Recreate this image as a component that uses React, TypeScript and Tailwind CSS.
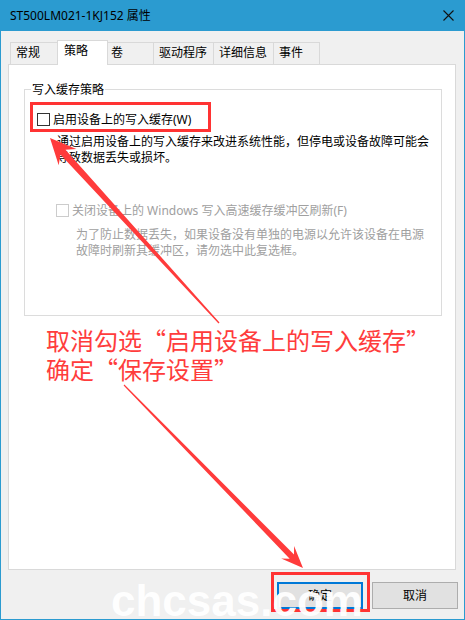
import React from "react";

type Pt = [number, number];

// Tapered annotation arrow: thin at the tail, widening toward a notched head.
function arrowPoints(tail: Pt, tip: Pt, headLen: number, headHalf: number, shaftTail: number, shaftHead: number): string {
  const dx = tip[0] - tail[0];
  const dy = tip[1] - tail[1];
  const len = Math.hypot(dx, dy);
  const ux = dx / len;
  const uy = dy / len;
  const nx = -uy;
  const ny = ux;
  const bx = tip[0] - ux * headLen;
  const by = tip[1] - uy * headLen;
  const jx = bx + ux * headLen * 0.2;
  const jy = by + uy * headLen * 0.2;
  const pts: Pt[] = [
    tip,
    [bx + nx * headHalf - ux * 2, by + ny * headHalf - uy * 2],
    [jx + nx * shaftHead, jy + ny * shaftHead],
    [tail[0] + nx * shaftTail, tail[1] + ny * shaftTail],
    [tail[0] - nx * shaftTail, tail[1] - ny * shaftTail],
    [jx - nx * shaftHead, jy - ny * shaftHead],
    [bx - nx * headHalf - ux * 2, by - ny * headHalf - uy * 2],
  ];
  return pts.map((p) => `${p[0].toFixed(1)},${p[1].toFixed(1)}`).join(" ");
}

const tabs = [
  { label: "常规", w: "w-[48px]", pl: "pl-[5px]", first: true },
  { label: "策略", w: "w-[51px]", pl: "pl-[6px]", active: true },
  { label: "卷", w: "w-[46px]", pl: "pl-[3px]" },
  { label: "驱动程序", w: "w-[60px]", pl: "pl-[5px]" },
  { label: "详细信息", w: "w-[60px]", pl: "pl-[5px]" },
  { label: "事件", w: "w-[46px]", pl: "pl-[5px]" },
];

export default function App() {
  return (
    <div className="relative w-[465px] h-[620px] overflow-hidden bg-[#f0f0f0] border-x border-b border-[#2b9bd0] flex flex-col font-['Noto_Sans','Noto_Sans_CJK_SC',sans-serif] text-[12px] text-black">
      {/* title bar */}
      <div className="h-[31px] -mx-px bg-[#2b9bd0] flex items-center justify-between pl-[10px] pr-[11px] shrink-0">
        <span className="leading-[16px] text-[12px] text-black">ST500LM021-1KJ152 属性</span>
        <svg width="11" height="11" viewBox="0 0 11 11" className="block">
          <path d="M0.5 0.5 L10.5 10.5 M10.5 0.5 L0.5 10.5" stroke="#111" strokeWidth="1.1" fill="none" />
        </svg>
      </div>

      <div className="flex-1 flex flex-col pl-[7px] pr-[8px]">
        {/* tab strip */}
        <div className="mt-[9px] h-[24px] flex items-end pl-[2px]">
          {tabs.map((t) =>
            t.active ? (
              <div
                key={t.label}
                className={`relative z-10 -ml-px ${t.w} h-[25px] -mb-px bg-white border-l border-t border-r border-[#d9d9d9] ${t.pl} pt-[2px] leading-[16px]`}
              >
                {t.label}
              </div>
            ) : (
              <div
                key={t.label}
                className={`${t.w} h-[22px] self-start mt-[2px] bg-[#f0f0f0] border-t border-r border-[#d9d9d9] ${t.first ? "border-l" : ""} ${t.pl} pt-[2px] leading-[16px]`}
              >
                {t.label}
              </div>
            )
          )}
        </div>

        {/* tab page */}
        <div className="h-[506px] bg-white border border-[#d9d9d9] pl-[15px] pr-[13px] pt-[24px] flex flex-col">
          <div className="relative h-[227px] border border-[#dcdcdc] pl-[12px] pt-[21px]">
            <span className="absolute left-[6px] top-[-8px] px-[1px] bg-white leading-[16px]">写入缓存策略</span>

            <div className="flex items-center h-[17px] gap-[3px]">
              <span className="w-[13px] h-[13px] border border-[#333333] bg-white shrink-0" />
              <span className="leading-[17px]">启用设备上的写入缓存(W)</span>
            </div>
            <div className="ml-[20px] mt-[6px] leading-[16px]">
              <div>通过启用设备上的写入缓存来改进系统性能，但停电或设备故障可能会</div>
              <div>导致数据丢失或损坏。</div>
            </div>

            <div className="ml-[19px] mt-[36px] flex items-center h-[17px] gap-[3px] text-[#a0a0a0]">
              <span className="w-[13px] h-[13px] border border-[#cccccc] bg-white shrink-0" />
              <span className="leading-[17px]">关闭设备上的 Windows 写入高速缓存缓冲区刷新(F)</span>
            </div>
            <div className="ml-[39px] mt-[8px] leading-[16px] text-[#a0a0a0]">
              <div>为了防止数据丢失，如果设备没有单独的电源以允许该设备在电源</div>
              <div>故障时刷新其缓冲区，请勿选中此复选框。</div>
            </div>
          </div>

          <div className="ml-[22px] mt-[9px] text-[24px] leading-[29px] text-[#ff3c3c] font-['Noto_Sans_CJK_SC',sans-serif] whitespace-nowrap">
            <div>取消勾选“启用设备上的写入缓存”</div>
            <div>确定“保存设置”</div>
          </div>
        </div>

        {/* dialog buttons */}
        <div className="mt-[12px] -mr-[2px] flex justify-end gap-[9px]">
          <button className="w-[86px] h-[27px] border-2 border-[#0078d7] bg-[#e1e1e1] leading-[16px] text-[12px]">确定</button>
          <button className="w-[86px] h-[27px] border border-[#adadad] bg-[#e1e1e1] leading-[16px] text-[12px]">取消</button>
        </div>
      </div>

      {/* highlight boxes */}
      <div className="absolute left-[29px] top-[102px] w-[181px] h-[30px] border-[3px] border-[#ff3333]" />
      <div className="absolute left-[270px] top-[572px] w-[99px] h-[40px] border-[3px] border-[#ff3333]" />

      {/* arrows */}
      <svg className="absolute left-0 top-0 pointer-events-none" width="465" height="620">
        <polygon points={arrowPoints([218, 323], [49, 138], 24, 12, 0.7, 3.5)} fill="#ff3b3b" />
        <polygon points={arrowPoints([123, 385], [302, 568], 20, 9, 0.6, 3)} fill="#ff3b3b" />
      </svg>

      {/* watermark */}
      <div className="absolute left-[110px] top-[579px] text-[44px] leading-[44px] font-bold text-white opacity-95 font-['Liberation_Sans',Arial,sans-serif] pointer-events-none">
        chcsas.com
      </div>
    </div>
  );
}
